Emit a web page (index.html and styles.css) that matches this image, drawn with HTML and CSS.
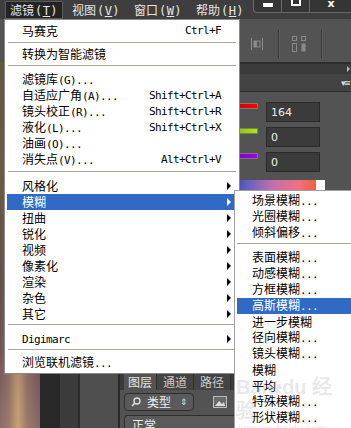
FILE: index.html
```html
<!DOCTYPE html>
<html lang="zh-CN">
<head>
    <meta charset="UTF-8">
    <title>滤镜 - 模糊</title>
    <link rel="stylesheet" href="styles.css">
</head>
<body>
    <div class="menubar">
        <div class="mb-item open">滤镜<span class="k">(<u>T</u>)</span></div>
        <div class="mb-item">视图<span class="k">(<u>V</u>)</span></div>
        <div class="mb-item">窗口<span class="k">(<u>W</u>)</span></div>
        <div class="mb-item">帮助<span class="k">(<u>H</u>)</span></div>
        <div class="winbtns">
            <div class="wb"><span class="wmin"></span></div>
            <div class="wb"><span class="wmax"></span></div>
            <div class="wb wclose">x</div>
        </div>
    </div>

    <div class="optbar">
        <svg class="ico1" width="14" height="14" viewBox="0 0 14 14">
            <rect x="1" y="1" width="1" height="12" fill="#8a8a8a"/>
            <rect x="4" y="4" width="6" height="6" fill="none" stroke="#8a8a8a"/>
            <rect x="4" y="4" width="3" height="6" fill="#8a8a8a"/>
            <rect x="12" y="1" width="1" height="12" fill="#8a8a8a"/>
        </svg>
        <div class="vdiv"></div>
        <svg class="ico2" width="16" height="18" viewBox="0 0 16 18">
            <rect x="1.5" y="1.5" width="4" height="4" fill="none" stroke="#8a8a8a"/>
            <rect x="10.5" y="1.5" width="4" height="4" fill="none" stroke="#8a8a8a"/>
            <rect x="1.5" y="8.5" width="4" height="8" fill="none" stroke="#8a8a8a"/>
            <rect x="10.5" y="8.5" width="4" height="8" fill="#8a8a8a"/>
        </svg>
        <div class="vdiv"></div>
    </div>

    <div class="work">
        <div class="pic"></div>
        <div class="paste"></div>
        <div class="strip"></div>
        <div class="col"></div>
        <div class="dock">
            <div class="phead"><span class="tri"></span></div>
            <div class="ptabs"><span class="pmenu">▾≡</span></div>
            <div class="color">
                <div class="crow"><div class="bar red"></div><div class="num">164</div></div>
                <div class="crow"><div class="bar lime"></div><div class="num">0</div></div>
                <div class="crow"><div class="bar violet"></div><div class="num">0</div></div>
                <div class="ramp"></div>
            </div>
            <div class="layers">
                <div class="ltabs">
                    <span class="lt on">图层</span>
                    <span class="lt">通道</span>
                    <span class="lt">路径</span>
                </div>
                <div class="lsearch">
                    <div class="sel">
                        <svg width="10" height="10" viewBox="0 0 10 10">
                            <circle cx="6" cy="4" r="3" fill="none" stroke="#ddd" stroke-width="1.4"/>
                            <line x1="4" y1="6" x2="1" y2="9" stroke="#ddd" stroke-width="1.6"/>
                        </svg>
                        <span class="seltxt">类型</span>
                        <span class="updown">⇕</span>
                    </div>
                    <svg class="imgico" width="14" height="12" viewBox="0 0 14 12">
                        <rect x="0.5" y="0.5" width="13" height="11" fill="#6a6a6a" stroke="#bbb"/>
                        <path d="M2 10 L6 5 L9 8 L11 6 L12 10 Z" fill="#ddd"/>
                    </svg>
                </div>
                <div class="lmode"><div class="sel2">正常</div></div>
            </div>
        </div>
    </div>

    <div class="menu mainmenu">
        <div class="mi"><span class="lbl">马赛克</span><span class="sc">Ctrl+F</span></div>
        <div class="sep s1"></div>
        <div class="mi"><span class="lbl">转换为智能滤镜</span></div>
        <div class="sep"></div>
        <div class="mi"><span class="lbl">滤镜库<span class="k">(G)...</span></span></div>
        <div class="mi"><span class="lbl">自适应广角<span class="k">(A)...</span></span><span class="sc">Shift+Ctrl+A</span></div>
        <div class="mi"><span class="lbl">镜头校正<span class="k">(R)...</span></span><span class="sc">Shift+Ctrl+R</span></div>
        <div class="mi"><span class="lbl">液化<span class="k">(L)...</span></span><span class="sc">Shift+Ctrl+X</span></div>
        <div class="mi"><span class="lbl">油画<span class="k">(O)...</span></span></div>
        <div class="mi"><span class="lbl">消失点<span class="k">(V)...</span></span><span class="sc">Alt+Ctrl+V</span></div>
        <div class="sep"></div>
        <div class="mi sub"><span class="lbl">风格化</span><i class="arr"></i></div>
        <div class="mi sub hl"><span class="lbl">模糊</span><i class="arr"></i></div>
        <div class="mi sub"><span class="lbl">扭曲</span><i class="arr"></i></div>
        <div class="mi sub"><span class="lbl">锐化</span><i class="arr"></i></div>
        <div class="mi sub"><span class="lbl">视频</span><i class="arr"></i></div>
        <div class="mi sub"><span class="lbl">像素化</span><i class="arr"></i></div>
        <div class="mi sub"><span class="lbl">渲染</span><i class="arr"></i></div>
        <div class="mi sub"><span class="lbl">杂色</span><i class="arr"></i></div>
        <div class="mi sub"><span class="lbl">其它</span><i class="arr"></i></div>
        <div class="sep s4"></div>
        <div class="mi sub"><span class="lbl"><span class="k">Digimarc</span></span><i class="arr"></i></div>
        <div class="sep s5"></div>
        <div class="mi"><span class="lbl">浏览联机滤镜<span class="k">...</span></span></div>
    </div>

    <div class="menu submenu">
        <div class="mi"><span class="lbl">场景模糊<span class="k">...</span></span></div>
        <div class="mi"><span class="lbl">光圈模糊<span class="k">...</span></span></div>
        <div class="mi"><span class="lbl">倾斜偏移<span class="k">...</span></span></div>
        <div class="sep s6"></div>
        <div class="mi"><span class="lbl">表面模糊<span class="k">...</span></span></div>
        <div class="mi"><span class="lbl">动感模糊<span class="k">...</span></span></div>
        <div class="mi"><span class="lbl">方框模糊<span class="k">...</span></span></div>
        <div class="mi hl"><span class="lbl">高斯模糊<span class="k">...</span></span></div>
        <div class="mi"><span class="lbl">进一步模糊</span></div>
        <div class="mi"><span class="lbl">径向模糊<span class="k">...</span></span></div>
        <div class="mi"><span class="lbl">镜头模糊<span class="k">...</span></span></div>
        <div class="mi"><span class="lbl">模糊</span></div>
        <div class="mi"><span class="lbl">平均</span></div>
        <div class="mi"><span class="lbl">特殊模糊<span class="k">...</span></span></div>
        <div class="mi"><span class="lbl">形状模糊<span class="k">...</span></span></div>
    </div>

    <div class="watermark">
        <div class="wm1">Bai<span class="paw">✿</span>du 经验</div>
        <div class="wm2">jingyan.baidu.com</div>
    </div>
</body>
</html>
```

FILE: styles.css
```css
body{
    margin: 0;
    width: 351px;
    height: 428px;
    overflow: hidden;
    position: relative;
    background-color: #535353;
    font-family: "Noto Sans CJK SC", sans-serif;
    font-size: 12px;
}
.k{
    font-family: "DejaVu Sans Mono", monospace;
    font-size: 11px;
    letter-spacing: -0.62px;
}
u{
    text-decoration: underline;
    text-underline-offset: 1px;
}

/* barre de menu */
.menubar{
    height: 19px;
    display: flex;
    align-items: flex-start;
    padding-left: 5px;
    background-color: #3e3e3e;
    color: #e6e6e6;
}
.mb-item{
    flex-shrink: 0;
    width: 48px;
    white-space: nowrap;
    height: 16px;
    padding: 0 4px;
    margin-top: 1px;
    margin-right: 4px;
    line-height: 16px;
    border: 1px solid transparent;
}
.mb-item .k{
    font-size: 12px;
    letter-spacing: 0.4px;
    margin-left: 1px;
}
.mb-item.open{
    background-color: #232323;
    border-color: #5c5c5c;
}
.winbtns{
    flex-shrink: 0;
    margin-left: auto;
    width: 98px;
    height: 12px;
    display: flex;
    background-color: #353535;
    border: 1px solid #6a6a6a;
    border-top: none;
    border-right: none;
    border-radius: 0 0 0 4px;
}
.wb{
    width: 27px;
    border-right: 1px solid #6a6a6a;
    display: flex;
    justify-content: center;
    color: #fff;
    overflow: hidden;
}
.wb.wclose{
    flex: 1;
    border-right: none;
    font-family: "DejaVu Sans", sans-serif;
    font-weight: bold;
    font-size: 11px;
    line-height: 8px;
}
.wmin{
    width: 10px;
    height: 4px;
    margin-top: 3px;
    background-color: #fff;
}
.wmax{
    width: 6px;
    height: 4px;
    border: 2px solid #fff;
    border-top: none;
}

/* barre d'options */
.optbar{
    height: 43px;
    display: flex;
    align-items: center;
    justify-content: flex-end;
    padding-top: 6px;
    padding-right: 28px;
    box-sizing: border-box;
    background-color: #535353;
}
.ico1{ margin-right: 14px; }
.vdiv{
    width: 1px;
    height: 28px;
    background-color: #3a3a3a;
    border-right: 1px solid #5e5e5e;
}
.ico2{
    margin-left: 11px;
    margin-right: 14px;
}

/* espace de travail */
.work{
    height: 366px;
    display: flex;
}
.pic{
    width: 40px;
    background:
        radial-gradient(ellipse at 18px 362px, rgba(214,176,122,0.8) 0, rgba(190,150,110,0.4) 9px, transparent 22px),
        linear-gradient(#5d5a3e, #6b5b42 30%, #5b4a47 60%, #6a4c55 80%, #86686a);
}
.paste{
    width: 20px;
    background-color: #282828;
}
.strip{
    width: 18px;
    background-color: #3b3b3b;
    border-right: 2px solid #2c2c2c;
}
.col{
    width: 38px;
    background-color: #4f4f4f;
    border-right: 2px solid #2a2a2a;
}
.dock{
    flex: 1;
    display: flex;
    flex-direction: column;
    background-color: #535353;
}
.phead{
    height: 10px;
    border-top: 2px solid #2e2e2e;
    background-color: #3b3b3b;
    display: flex;
    justify-content: flex-end;
    align-items: center;
    padding-right: 1px;
}
.tri{
    width: 0;
    height: 0;
    border-left: 3px solid #bbb;
    border-top: 3px solid transparent;
    border-bottom: 3px solid transparent;
}
.ptabs{
    height: 17px;
    background-color: #434343;
    border-bottom: 1px solid #2e2e2e;
    display: flex;
    justify-content: flex-end;
    align-items: center;
    color: #ddd;
    font-family: "DejaVu Sans", sans-serif;
    font-size: 9px;
    letter-spacing: -2px;
    padding-right: 2px;
}
.color{
    padding: 10px 0 0 30px;
    display: flex;
    flex-direction: column;
    gap: 5px;
}
.crow{
    display: flex;
    align-items: flex-start;
    gap: 8px;
}
.bar{
    width: 106px;
    height: 4px;
    margin-top: 1px;
    border: 1px solid #7a7a7a;
}
.red{ background: linear-gradient(to right, #000, #ff0000); }
.lime{ background: linear-gradient(to right, #000, #a8f000); }
.violet{ background: linear-gradient(to right, #000, #a000f0); }
.num{
    width: 48px;
    height: 18px;
    border: 1px solid #2a2a2a;
    background-color: #3b3b3b;
    color: #f0f0f0;
    font-family: "DejaVu Sans", sans-serif;
    font-size: 11px;
    line-height: 19px;
    padding-left: 4px;
    box-sizing: content-box;
}
.ramp{
    width: 175px;
    height: 10px;
    margin-top: 3px;
    background: linear-gradient(to right, #0000ff, #2020a0 40%, #6060c0 55%, #c070b0 70%, #f07080 85%, #f06040 95%, #ffffff 95%);
}
.layers{
    margin-top: auto;
    height: 55px;
}
.ltabs{
    height: 17px;
    display: flex;
    padding-left: 4px;
    background-color: #3a3a3a;
}
.lt{
    padding: 0 6px;
    line-height: 17px;
    color: #c8c8c8;
    background-color: #444;
    border-right: 1px solid #2e2e2e;
}
.lt.on{
    padding: 0 4px;
    background-color: #535353;
    color: #e8e8e8;
}
.lsearch{
    height: 23px;
    display: flex;
    align-items: center;
    padding-left: 4px;
}
.sel{
    width: 70px;
    height: 18px;
    display: flex;
    align-items: center;
    gap: 6px;
    padding: 0 5px 0 6px;
    box-sizing: border-box;
    background-color: #5a5a5a;
    border: 1px solid #2e2e2e;
    border-radius: 4px;
    color: #eee;
}
.updown{
    margin-left: auto;
    font-size: 9px;
    color: #ddd;
}
.imgico{
    margin-left: 19px;
}
.lmode{
    padding: 2px 4px 0;
}
.sel2{
    height: 16px;
    border: 1px solid #2e2e2e;
    border-radius: 3px;
    background-color: #5a5a5a;
    color: #eee;
    padding-left: 7px;
    line-height: 18px;
}

/* menus */
.menu{
    position: absolute;
    background-color: #fff;
    border: 1px solid #8a8a8a;
    color: #000;
}
.mainmenu{
    left: 4px;
    top: 19px;
    width: 234px;
    padding: 3px 0 2px;
}
.submenu{
    left: 234px;
    top: 190px;
    width: 140px;
    height: 260px;
    border-color: #a0a0a0;
    padding-top: 2px;
}
.mi{
    height: 16px;
    line-height: 16px;
    margin: 0 2px;
    padding: 0 16px 0 15px;
    display: flex;
    align-items: center;
    white-space: nowrap;
}
.submenu .mi{
    margin: 0 0 0 2px;
}
.lbl{
    flex: 1;
}
.sc{
    font-family: "DejaVu Sans Mono", monospace;
    font-size: 11px;
    letter-spacing: -0.62px;
}
.mi.sub{
    padding-right: 6px;
}
.arr{
    width: 0;
    height: 0;
    border-left: 4px solid #000;
    border-top: 4px solid transparent;
    border-bottom: 4px solid transparent;
}
.mi.hl{
    background-color: #316ac5;
    color: #fff;
}
.mi.hl .arr{
    border-left-color: #fff;
}
.sep{
    height: 1px;
    margin: 3px 3px 6px;
    background-color: #aca899;
}
.sep.s1{ margin-bottom: 3px; }
.sep.s4{ margin-top: 2px; }
.sep.s5{ margin-top: 2px; margin-bottom: 5px; }
.sep.s6{ margin: 2px 0 6px 2px; }

/* filigrane */
.watermark{
    position: absolute;
    left: 236px;
    top: 376px;
    color: rgba(150, 150, 150, 0.22);
    pointer-events: none;
}
.wm1{
    font-family: "Liberation Sans", sans-serif;
    font-size: 20px;
    font-weight: bold;
    line-height: 22px;
}
.paw{
    font-size: 15px;
}
.wm2{
    font-family: "Liberation Sans", sans-serif;
    font-size: 11px;
    line-height: 12px;
    margin-left: 2px;
}
```
